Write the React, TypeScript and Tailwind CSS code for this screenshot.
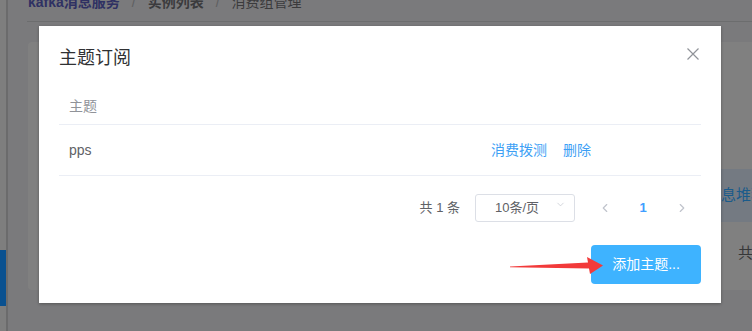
import { ChevronDown, ChevronLeft, ChevronRight } from "lucide-react";

const font = "font-['Liberation_Sans','Noto_Sans_CJK_SC',sans-serif]";

const Backdrop = () => (
  <div className="flex w-full h-full">
    <div className="relative w-[8px] h-full bg-[#7e7e7e] border-r-2 border-[#6b6b6c]">
      <div className="mt-[250px] w-[6px] h-[56px] bg-[#0a5190]" />
    </div>
    <div className="flex flex-col flex-1 pl-[19px] overflow-hidden">
      <div className="h-[22px] border-b border-[#6c6d6e] overflow-hidden">
        <div className="flex items-center gap-x-[12px] -mt-[8px] text-[14px] leading-[20px] text-[#3b3b3d] whitespace-nowrap pl-[1px]">
          <span className="font-bold text-[#2f3163]">kafka消息服务</span>
          <span className="text-[#5e5f61]">/</span>
          <span className="font-bold">实例列表</span>
          <span className="text-[#5e5f61]">/</span>
          <span>消费组管理</span>
        </div>
      </div>
      <div className="mt-[20px] ml-[1px] h-[248px] bg-[#808080] rounded-l-[4px] pt-[127px] whitespace-nowrap">
        <div className="flex items-center ml-[20px] h-[53px] pl-[658px] bg-[#747a82] text-[15px] text-[#1a5b8b]">
          消息堆积
        </div>
        <div className="mt-[21px] pl-[710px] text-[15px] leading-[20px] text-[#363738]">共 2 条</div>
      </div>
    </div>
  </div>
);

export default function App() {
  return (
    <div className={`relative w-[752px] h-[331px] overflow-hidden bg-[#7a7a7c] ${font}`}>
      <Backdrop />

      <div className="absolute left-[39px] top-[26px] w-[682px] h-[277px] bg-white shadow-[0_1px_3px_rgba(0,0,0,0.3)] flex flex-col px-[20px] pt-[20px]">
        <div className="flex justify-between items-start">
          <h2 className="text-[18px] leading-[24px] text-[#303133]">主题订阅</h2>
          <svg className="mt-[2px] mr-[2px]" width="12" height="12" viewBox="0 0 12 12">
            <path d="M0.5 0.5 L11.5 11.5 M11.5 0.5 L0.5 11.5" stroke="#909399" strokeWidth="1.2" fill="none" />
          </svg>
        </div>

        <div className="mt-[19px] text-[14px]">
          <div className="flex items-center h-[36px] px-[10px] border-b border-[#ebeef5] text-[#909399]">
            主题
          </div>
          <div className="flex items-center h-[51px] border-b border-[#ebeef5] text-[#606266]">
            <span className="flex-1 px-[10px]">pps</span>
            <span className="flex gap-x-[16px] w-[220px] px-[10px] text-[#3d9ff5]">
              <span>消费拨测</span>
              <span>删除</span>
            </span>
          </div>
        </div>

        <div className="flex justify-end items-center mt-[18px] pr-[4px] text-[13px] text-[#606266]">
          <span className="mr-[15px]">共 1 条</span>
          <div className="relative flex justify-center items-center w-[100px] h-[28px] border border-[#dcdfe6] rounded-[3px]">
            <span className="pr-[16px]">10条/页</span>
            <ChevronDown className="absolute right-[8px] top-[4px] w-[11px] h-[11px] text-[#c0c4cc]" strokeWidth={1.5} />
          </div>
          <div className="flex justify-center items-center ml-[15px] w-[30px] h-[28px] text-[#c0c4cc]">
            <ChevronLeft className="w-[14px] h-[14px]" strokeWidth={2} />
          </div>
          <div className="flex justify-center items-center ml-[8px] w-[30px] h-[28px] font-bold text-[#409eff]">1</div>
          <div className="flex justify-center items-center ml-[9px] w-[30px] h-[28px] text-[#c0c4cc]">
            <ChevronRight className="w-[14px] h-[14px]" strokeWidth={2} />
          </div>
        </div>

        <div className="flex justify-end mt-[23px]">
          <button className="w-[110px] h-[39px] rounded-[4px] bg-[#3eb3ff] text-[14px] text-white">
            添加主题...
          </button>
        </div>
      </div>

      <svg className="absolute left-0 top-0" width="752" height="331" viewBox="0 0 752 331">
        <polygon
          points="510,266.5 588,262.5 587,257 603,265.5 590,274 589,268.5 510,267.3"
          fill="#f23a3a"
        />
      </svg>
    </div>
  );
}
